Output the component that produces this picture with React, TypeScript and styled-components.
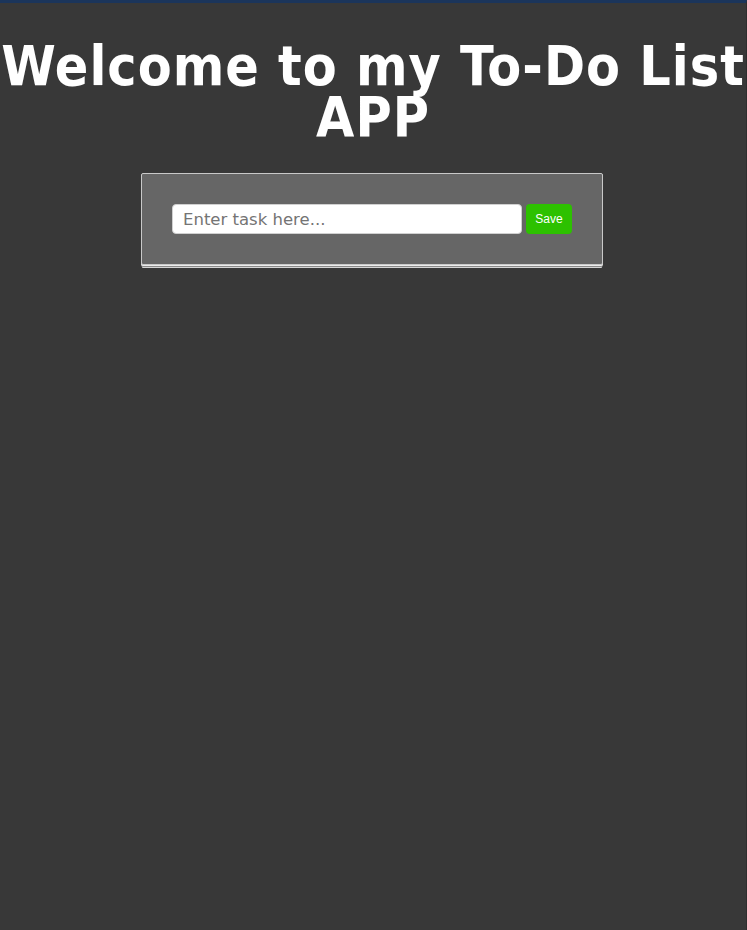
import React from "react";
import styled, { createGlobalStyle } from "styled-components";

const GlobalStyle = createGlobalStyle`
  html, body {
    margin: 0;
    padding: 0;
    background: #383838;
    min-height: 100%;
  }
  body {
    font-family: "DejaVu Sans", Verdana, sans-serif;
  }
`;

const Page = styled.div`
  min-height: 930px;
  background: #383838;
  border-top: 3px solid #1b355b;
  border-right: 1px solid #2e2e2e;
  box-sizing: border-box;
  overflow: hidden;
`;

const Heading = styled.h1`
  margin: 38px -20px 30px;
  text-align: center;
  color: #ffffff;
  font-family: "DejaVu Sans Condensed", "DejaVu Sans", Tahoma, sans-serif;
  font-weight: 700;
  font-size: 55px;
  line-height: 51px;
  letter-spacing: 1px;
`;

const Card = styled.div`
  width: 462px;
  margin: 0 auto;
  position: relative;
  left: -1px;
  box-sizing: border-box;
  padding: 30px;
  background: #666666;
  border: 1px solid #c9c9c9;
  border-radius: 2px;
  box-shadow: 0 1px 0 0 #ececec, 0 2px 0 0 #8a8a8a, 0 4px 0 -1px #d4d4d4;
  display: flex;
  align-items: center;
  gap: 4px;
`;

const TaskInput = styled.input`
  width: 350px;
  height: 30px;
  box-sizing: border-box;
  padding: 0 10px;
  border: 1px solid #d0d0d0;
  border-radius: 4px;
  background: #ffffff;
  font-family: "DejaVu Sans", Verdana, sans-serif;
  font-size: 16.5px;
  color: #333;
  outline: none;

  &::placeholder {
    color: #747474;
  }
`;

const SaveButton = styled.button`
  width: 46px;
  height: 30px;
  border: none;
  border-radius: 4px;
  background: #2dc100;
  color: #ffffff;
  font-family: "Liberation Sans", Arial, sans-serif;
  font-size: 12px;
  padding: 0;
  cursor: pointer;
`;

export default function App() {
  return (
    <>
      <GlobalStyle />
      <Page>
        <Heading>Welcome to my To-Do List APP</Heading>
        <Card>
          <TaskInput type="text" placeholder="Enter task here..." />
          <SaveButton>Save</SaveButton>
        </Card>
      </Page>
    </>
  );
}
